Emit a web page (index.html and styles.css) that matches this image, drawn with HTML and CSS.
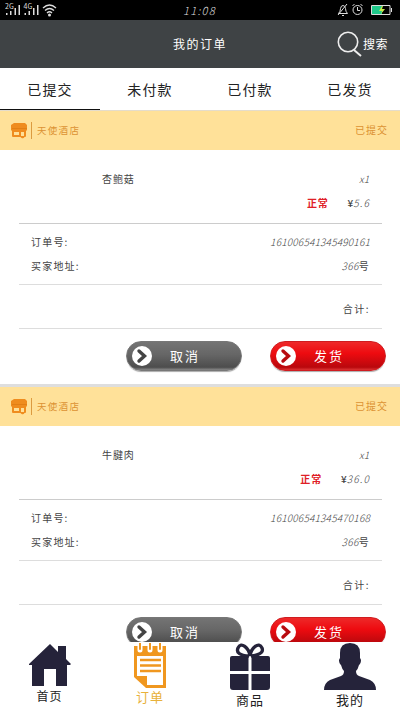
FILE: index.html
```html
<!DOCTYPE html>
<html lang="zh-CN">
<head>
<meta charset="utf-8">
<title>我的订单</title>
<link rel="stylesheet" href="styles.css">
</head>
<body>
<svg width="0" height="0" class="defs">
  <symbol id="shop" viewBox="0 0 17 17"><path fill="#ef8c1e" d="M3 1h11l2 2v5l-1 1v5q0 1-1 1h-.5q-1 2-3 1l-1-1H2q-1 0-1-1V9L0 8V3z"/><path fill="#ffe098" d="M3 10h5v3H3zM10 10h3v4h-3z"/><path stroke="#d9770e" stroke-width=".6" d="M1 6.500h15"/></symbol>
  <symbol id="arrow" viewBox="0 0 20 20"><circle cx="10" cy="10" r="10" fill="#fff"/><path d="M7 5l5.500 5L7 15" fill="none" stroke="currentColor" stroke-width="3.400" stroke-linecap="round"/></symbol>
</svg>
<div class="status">
  <svg class="signals" width="54" height="16" viewBox="0 0 54 16">
    <g fill="#ddd"><path d="M1 11h1.500v2H1zM5 9h1.500v4H5zM9.500 6H11v7H9.500zM13.500 3H15v10h-1.500zM19.500 11H21v2h-1.500zM23.500 9H25v4h-1.500zM28 6h1.500v7H28zM32 3h1.500v10H32z"/><text x="0" y="6.500" font-size="7">2G</text><text x="18.500" y="6.500" font-size="7">4G</text><circle cx="44.500" cy="13" r="1.500"/></g>
    <path d="M38 6q6.500-6 13 0M40 8.500q4.500-4 9 0M42 11q2.500-2.500 5 0" fill="none" stroke="#ddd" stroke-width="1.300"/>
  </svg>
  <span class="clock">11:08</span>
  <svg class="right-icons" width="57" height="14" viewBox="0 0 57 14" fill="none" stroke="#ddd">
    <path d="M1.500 10.500q2-2 2-5 .5-3 2.500-3t2.500 3q0 3 2 5zM5 12.500h2M1 12L10 1"/><circle cx="20.500" cy="7" r="4.500"/><path d="M20.500 4v3.500h2.500M15.500 3l2-2M25.500 3l-2-2"/><path d="M34.500 2.500H53v9H34.500zM54.500 5v4"/><path fill="#1fc98b" stroke="none" d="M35 3h10v8H35z"/><path fill="#c9e94a" stroke="none" d="M45 3l-3 5h3l-1 3 4-5h-3l1-3z"/>
  </svg>
</div>
<header class="header">
  <h1 class="title">我的订单</h1>
  <div class="search"><svg width="26" height="26" viewBox="0 0 26 26" fill="none" stroke="#eee" stroke-width="1.600"><circle cx="11" cy="11" r="9.700"/><path d="M17 19l7 6" stroke-width="2"/></svg><span>搜索</span></div>
</header>
<nav class="tabs"><span class="tab active">已提交</span><span class="tab">未付款</span><span class="tab">已付款</span><span class="tab">已发货</span></nav>
<main class="orders">
  <section class="order">
    <div class="band"><svg class="shop" width="17" height="17"><use href="#shop"/></svg><span class="name">天使酒店</span><span class="state">已提交</span></div>
    <div class="body">
      <div class="item"><span>杏鲍菇</span><span class="num">x1</span></div>
      <div class="price"><b>正常</b><span class="num"><i class="yen">¥</i>5.6</span></div>
      <div class="details">
        <div class="row"><span>订单号:</span><span class="num">161006541345490161</span></div>
        <div class="row"><span>买家地址:</span><span><span class="num">366</span>号</span></div>
      </div>
      <div class="total">合计:</div>
      <div class="actions"><a class="btn gray"><svg width="20" height="20"><use href="#arrow"/></svg><span>取消</span></a><a class="btn red"><svg width="20" height="20"><use href="#arrow"/></svg><span>发货</span></a></div>
    </div>
  </section>
  <section class="order">
    <div class="band"><svg class="shop" width="17" height="17"><use href="#shop"/></svg><span class="name">天使酒店</span><span class="state">已提交</span></div>
    <div class="body">
      <div class="item"><span>牛腱肉</span><span class="num">x1</span></div>
      <div class="price"><b>正常</b><span class="num"><i class="yen">¥</i>36.0</span></div>
      <div class="details">
        <div class="row"><span>订单号:</span><span class="num">161006541345470168</span></div>
        <div class="row"><span>买家地址:</span><span><span class="num">366</span>号</span></div>
      </div>
      <div class="total">合计:</div>
      <div class="actions"><a class="btn gray"><svg width="20" height="20"><use href="#arrow"/></svg><span>取消</span></a><a class="btn red"><svg width="20" height="20"><use href="#arrow"/></svg><span>发货</span></a></div>
    </div>
  </section>
</main>
<nav class="bottom">
  <a class="dest home"><svg width="44" height="43" viewBox="0 0 44 43"><path fill="#25233a" d="M22 1l8 8V3h8v13l5 5-1 1h-3v21H28V26H16v17H4V22H1v-1z"/></svg><span>首页</span></a>
  <a class="dest list"><svg width="32" height="45" viewBox="0 0 32 45"><path fill="#f0971f" d="M0 3h32v42H12L0 34z"/><path fill="#fff" d="M3 13h26v29H13V33H3z"/><path fill="#f0971f" d="M3 34h9v9z"/><path stroke="#f0971f" stroke-width="2.600" d="M6 17h21M6 22.500h21M6 28h21"/><path stroke="#fff" stroke-width="5" stroke-linecap="round" d="M6 1v6M16 1v6M26 1v6"/><path stroke="#f0971f" stroke-width="2" stroke-linecap="round" d="M6 0v6M16 0v6M26 0v6"/></svg><span>订单</span></a>
  <a class="dest gift"><svg width="40" height="47" viewBox="0 0 40 47"><path fill="#25233a" d="M0 15q0-2 2-2h16.500v15H0zM21.500 13H38q2 0 2 2v13H21.500zM0 31h18.500v16H3q-3 0-3-3zM21.500 31H40v13q0 3-3 3H21.500z"/><path fill="none" stroke="#25233a" stroke-width="3.300" d="M19 13Q5 12 8 5c3-7 11 0 12 8 1-8 9-15 12-8 3 7-11 8-11 8"/></svg><span>商品</span></a>
  <a class="dest me"><svg width="52" height="47" viewBox="0 0 52 47"><path fill="#25233a" d="M16 10Q16 0 26 0t10 10v5q2 2 0 6l-1 1q-1 4-3 6 0 4 3 5l11 4q6 3 6 10H0q0-7 6-10l11-4q3-1 3-5-2-2-3-6l-1-1q-2-4 0-6z"/></svg><span>我的</span></a>
</nav>
</body>
</html>
```
FILE: styles.css
```css
* { box-sizing: border-box; }
body {
  margin: 0;
  width: 400px;
  height: 710px;
  display: flex;
  flex-direction: column;
  overflow: hidden;
  background: #fff;
  color: #444;
  font: 400 10px/14px "Noto Sans CJK SC", sans-serif;
}
svg { display: block; flex: none; }
.defs { position: absolute; }
.status {
  height: 20px;
  flex: none;
  display: grid;
  grid-template-columns: 1fr auto 1fr;
  align-items: center;
  padding: 0 6px 0 5px;
  background: #000;
  color: #ddd;
}
.clock { font: italic 300 11px/20px "Noto Sans CJK SC", sans-serif; letter-spacing: 1.300px; }
.right-icons { justify-self: end; }
.header {
  height: 48px;
  flex: none;
  display: grid;
  grid-template-columns: 1fr auto 1fr;
  align-items: center;
  background: #3f4345;
  color: #fff;
}
.title { grid-column: 2; margin: 0; font-size: 12px; font-weight: 400; letter-spacing: 1.500px; }
.search {
  justify-self: end;
  display: flex;
  align-items: center;
  padding-right: 12px;
  font-size: 12px;
}
.search span { letter-spacing: .5px; }
.tabs { height: 42px; flex: none; display: grid; grid-template-columns: repeat(4, 1fr); }
.tab {
  height: 42px;
  padding-top: 1px;
  text-align: center;
  font-size: 14px;
  line-height: 40px;
  letter-spacing: 1.200px;
  color: #222;
}
.tab.active { border-bottom: 1px solid #111; }
.orders { height: 532px; flex: none; overflow: hidden; }
.order { border-top: 3px solid #dedede; height: 276px; }
.order:first-child { border-top: 1px solid #e5dccb; height: 274px; }
.band {
  height: 39px;
  display: flex;
  align-items: center;
  padding: 0 12px 0 11px;
  background: #ffe199;
  color: #dc9233;
}
.name {
  height: 17px;
  margin-left: 3px;
  padding-left: 5px;
  border-left: 1px solid #dc9b40;
  line-height: 17px;
  font-size: 9.500px;
  letter-spacing: 1.300px;
}
.state { margin: -2px 0 0 auto; font-size: 10px; letter-spacing: 1px; }
.body { margin: 0 18px 0 19px; }
.item {
  height: 41px;
  padding: 22px 13px 0 83px;
  display: flex;
  justify-content: space-between;
  letter-spacing: .9px;
}
.price {
  height: 32px;
  padding: 5px 12px 0 0;
  display: flex;
  justify-content: flex-end;
  gap: 19px;
}
.price b { color: #df2027; font-weight: 700; letter-spacing: .8px; font-size: 10px; }
.num { font-style: italic; font-weight: 300; letter-spacing: 0; }
.price .num { letter-spacing: 1.200px; }
.yen { font-style: normal; font-weight: 500; letter-spacing: 0; }
.details {
  height: 61px;
  padding: 11px 12px 0;
  border-top: 1px solid #ccc;
}
.row { display: flex; justify-content: space-between; height: 24px; letter-spacing: 1.200px; }
.row .num { letter-spacing: .4px; }
.row > .num { letter-spacing: .2px; }
.total {
  height: 45px;
  padding: 17px 12px 0 0;
  border: solid #ddd;
  border-width: 1px 0;
  text-align: right;
  letter-spacing: 1.500px;
}
.actions {
  display: flex;
  justify-content: flex-end;
  gap: 28px;
  padding-top: 12px;
  margin-right: -4px;
}
.btn {
  width: 116px;
  height: 30px;
  display: flex;
  align-items: center;
  padding-left: 5px;
  border-radius: 15px;
  color: #fff;
  font-size: 13px;
  letter-spacing: 2px;
  box-shadow: 0 2px 1px -1px #aaa;
}
.btn span { margin-left: 18px; }
.gray svg { color: #444; }
.red svg { color: #b80b10; }
.gray { background: linear-gradient(#747474, #666 45%, #4d4d4d 90%, #888); border: 1px solid #777; }
.red { background: linear-gradient(#ee2929, #ee0b10 40%, #b9080d 90%, #d33); border: 1px solid #cf1c20; }
.bottom {
  height: 68px;
  flex: none;
  display: grid;
  grid-template-columns: repeat(4, 100px);
  background: #fff;
}
.dest {
  display: flex;
  flex-direction: column;
  align-items: center;
  padding-top: 1px;
  color: #222;
  font-size: 13px;
  line-height: 16px;
  letter-spacing: 1px;
}
.dest span { margin-top: 2px; }
.home { padding-right: 1px; }
.home span { font-size: 12px; }
.list { color: #e8b13a; }
.list span { margin-top: 1px; }
```
